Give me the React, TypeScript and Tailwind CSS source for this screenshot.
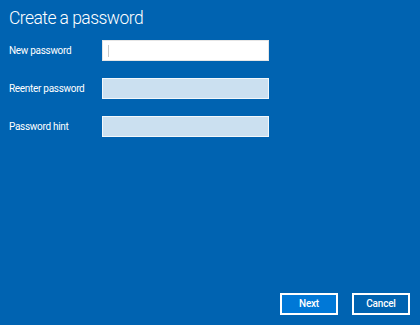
import React from "react";

function Row({ label, active }: { label: string; active?: boolean }) {
  return (
    <div className="flex items-center h-[21px]">
      <div className="w-[93px] text-[10px] tracking-[-0.3px] text-white leading-none">{label}</div>
      {active ? (
        <div className="w-[167px] h-[21px] bg-white border border-[#e6e6e6] flex items-center pl-[5px]">
          <div className="w-[1px] h-[12px] bg-[#c8c8c8]" />
        </div>
      ) : (
        <div className="w-[167px] h-[21px] bg-[#cbe0f0] border border-[#f2f7fb]" />
      )}
    </div>
  );
}

export default function App() {
  return (
    <div className="w-[420px] h-[325px] bg-[#0063b1] flex flex-col pl-[9px] pr-[10px] pt-[6px] pb-[10px] font-['Roboto',_'Liberation_Sans',_sans-serif]">
      <div className="text-[17.5px] tracking-[-0.55px] font-light text-white leading-[24px]">Create a password</div>
      <div className="mt-[10px] flex flex-col gap-[17px]">
        <Row label="New password" active />
        <Row label="Reenter password" />
        <Row label="Password hint" />
      </div>
      <div className="mt-auto flex justify-end gap-[14px]">
        <button className="w-[58px] h-[22px] bg-[#0078d7] border-2 border-white text-white text-[10px] tracking-[-0.2px] font-medium leading-none">
          Next
        </button>
        <button className="w-[58px] h-[22px] bg-[#0063b1] border-2 border-white text-white text-[10px] tracking-[-0.2px] font-medium leading-none">
          Cancel
        </button>
      </div>
    </div>
  );
}
